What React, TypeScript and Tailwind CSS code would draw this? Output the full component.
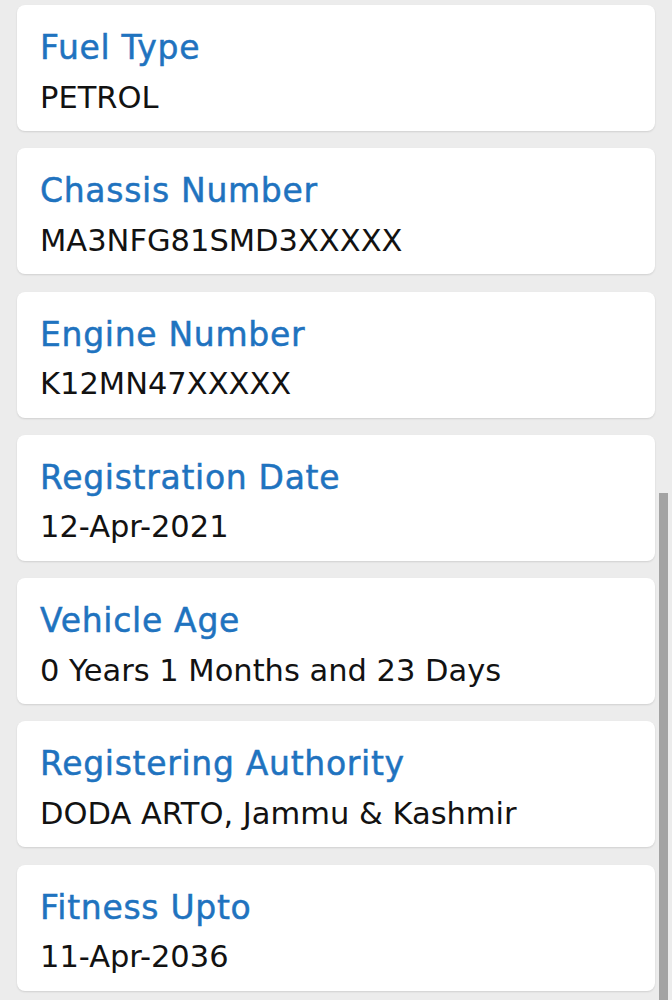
const rows = [
    { label: "Fuel Type", value: "PETROL" },
    { label: "Chassis Number", value: "MA3NFG81SMD3XXXXX" },
    { label: "Engine Number", value: "K12MN47XXXXX" },
    { label: "Registration Date", value: "12-Apr-2021" },
    { label: "Vehicle Age", value: "0 Years 1 Months and 23 Days" },
    { label: "Registering Authority", value: "DODA ARTO, Jammu & Kashmir" },
    { label: "Fitness Upto", value: "11-Apr-2036" },
];

export default function App() {
    return (
        <div className="relative w-[672px] h-[1000px] overflow-hidden bg-[#ececec] font-['DejaVu_Sans',sans-serif]">
            <div className="flex flex-col gap-[17.3px] px-[17px] pt-[5px]">
                {rows.map((row) => (
                    <div key={row.label}
                         className="h-[126px] rounded-lg bg-white px-[23px] pt-[23px] shadow-[0_1px_2px_rgba(0,0,0,0.12)]">
                        <div className="text-[33px] leading-[40px] tracking-[0.7px] text-[#1f73bf] [-webkit-text-stroke:0.5px_#1f73bf]">{row.label}</div>
                        <div className="mt-[9.5px] text-[30.5px] leading-[40px] text-[#121212]">{row.value}</div>
                    </div>
                ))}
            </div>
            <div className="absolute right-[4px] top-[493px] h-[507px] w-[9px] bg-[#a3a3a3]"></div>
        </div>
    );
}
